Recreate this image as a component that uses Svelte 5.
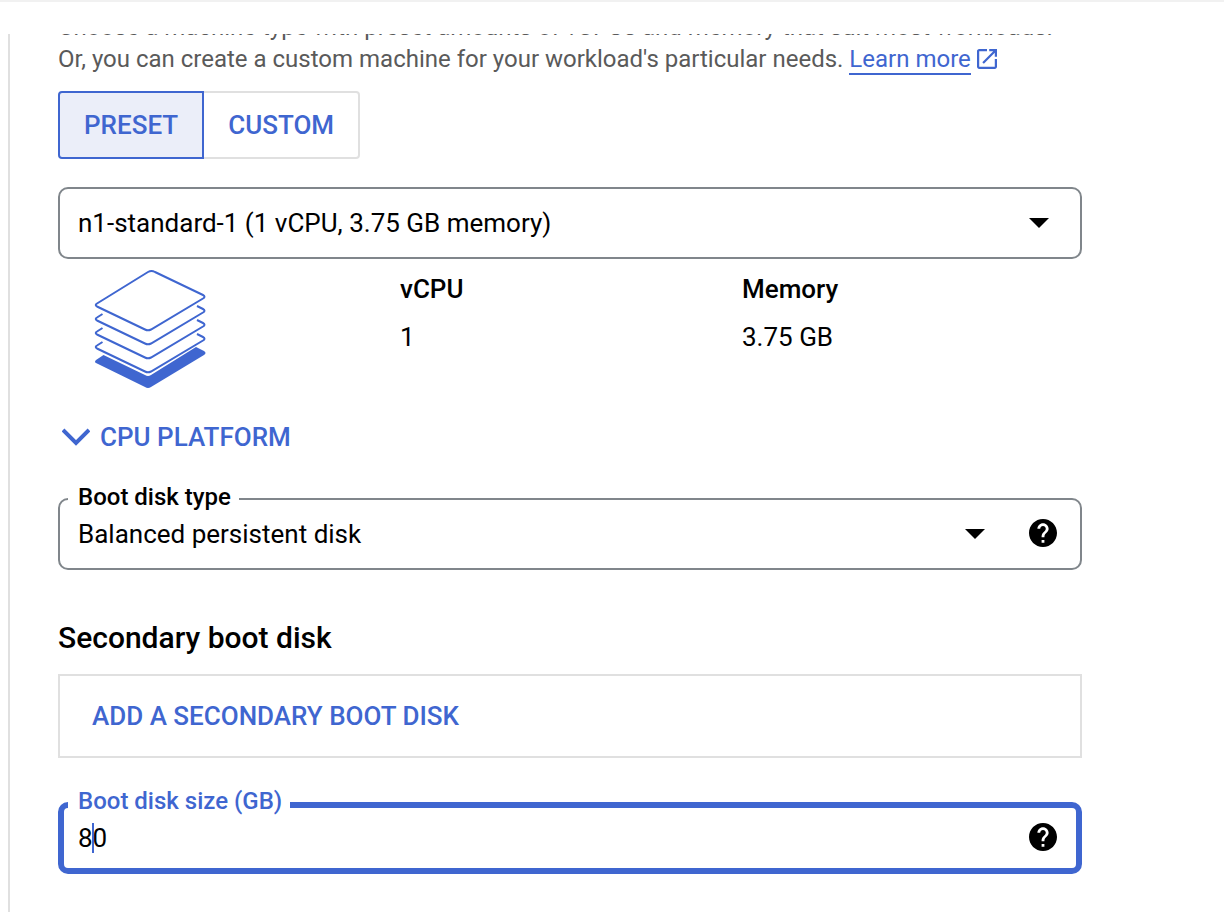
<script lang="ts">
	let mode = 'preset';
	let machineType = 'n1-standard-1';
	let diskType = 'balanced';
	let diskSize = '80';
	let showPlatform = false;

	const layers = [42, 28, 14];
</script>

{#snippet arrow()}
	<svg class="arrow" viewBox="0 0 20 10" aria-hidden="true"><path d="M0 0h20L10 10z" /></svg>
{/snippet}

{#snippet help(label: string)}
	<button class="help" type="button" aria-label={label}>
		<svg viewBox="2 2 20 20" aria-hidden="true">
			<path d="M12 2C6.48 2 2 6.48 2 12s4.48 10 10 10 10-4.48 10-10S17.52 2 12 2zm1 17h-2v-2h2v2zm2.07-7.75l-.9.92C13.45 12.9 13 13.5 13 15h-2v-.5c0-1.1.45-2.1 1.17-2.83l1.24-1.26c.37-.36.59-.86.59-1.41 0-1.1-.9-2-2-2s-2 .9-2 2H8c0-2.21 1.79-4 4-4s4 1.79 4 4c0 .88-.36 1.68-.93 2.25z" />
		</svg>
	</button>
{/snippet}

<div class="page">
	<header class="top-bar"></header>

	<main class="panel">
		<p class="intro">
			Choose a machine type with preset amounts of vCPUs and memory that suit most workloads.<br />
			Or, you can create a custom machine for your workload's particular needs.
			<a href="/docs/machine-types"><span>Learn more</span><svg class="external" viewBox="3 3 18 18" aria-hidden="true"><path d="M19 19H5V5h7V3H5c-1.11 0-2 .9-2 2v14c0 1.1.89 2 2 2h14c1.1 0 2-.9 2-2v-7h-2v7zM14 3v2h3.59l-9.83 9.83 1.41 1.41L19 6.41V10h2V3h-7z" /></svg></a>
		</p>

		<div class="toggle">
			<button type="button" class:active={mode === 'preset'} on:click={() => (mode = 'preset')}>PRESET</button>
			<button type="button" class:active={mode === 'custom'} on:click={() => (mode = 'custom')}>CUSTOM</button>
		</div>

		<div class="field machine">
			<select aria-label="Machine type" bind:value={machineType}>
				<option value="n1-standard-1">n1-standard-1 (1 vCPU, 3.75 GB memory)</option>
			</select>
			{@render arrow()}
		</div>

		<!-- Machine summary -->
		<div class="summary">
			<svg class="stack" viewBox="0 0 112 120" aria-hidden="true">
				<path class="solid" d="M9.500 86L2 91Q0 93 2 94L51 118Q54 120 57 118L110 86Q113 84 110 82L102 78L57 106Q54 108 51 106Z" />
				{#each layers as y}
					<path d="M8.500 31L3 34.500Q.5 36 3 37.500L51 60.500Q54 62 57 60.500L109 29.500Q112 27.500 109 26L103 23" transform="translate(0 {y})" />
				{/each}
				<path class="top" d="M3 34.500L54 3Q57.500 1 61 3L109 26Q112 27.500 109 29.500L57 60.500Q54 62 51 60.500L3 37.500Q.5 36 3 34.500Z" />
			</svg>
			<dl>
				<dt>vCPU</dt>
				<dd>1</dd>
			</dl>
			<dl>
				<dt>Memory</dt>
				<dd>3.75 GB</dd>
			</dl>
		</div>

		<button class="platform" type="button" aria-expanded={showPlatform} on:click={() => (showPlatform = !showPlatform)}>
			<svg viewBox="0 0 28 18" aria-hidden="true"><path d="M1 2l13 13L27 2" /></svg>
			CPU PLATFORM
		</button>

		<div class="field">
			<label for="disk-type">Boot disk type</label>
			<select id="disk-type" bind:value={diskType}>
				<option value="balanced">Balanced persistent disk</option>
			</select>
			{@render arrow()}
			{@render help('About boot disk type')}
		</div>

		<h2>Secondary boot disk</h2>
		<div class="secondary">
			<button type="button">ADD A SECONDARY BOOT DISK</button>
		</div>

		<div class="field focused">
			<label for="disk-size">Boot disk size (GB)</label>
			<input id="disk-size" type="text" inputmode="numeric" bind:value={diskSize} />
			<span class="caret"></span>
			{@render help('About boot disk size')}
		</div>
	</main>
</div>

<style>
	:global(body) {
		margin: 0;
		background: #fff;
	}
	.page {
		display: flex;
		flex-direction: column;
		min-height: 100vh;
		color: #000;
		font-family: Roboto, "Liberation Sans", sans-serif;
		font-size: 26px;
		line-height: 32px;
	}
	button, input, select {
		font: inherit;
		color: inherit;
		background: none;
		border: none;
		padding: 0;
		margin: 0;
	}
	button {
		cursor: pointer;
	}
	.top-bar {
		box-sizing: border-box;
		height: 34px;
		border-top: 2px solid #f1f1f1;
	}
	.panel {
		flex: 1;
		overflow: hidden;
		margin-left: 8px;
		padding: 0 142px 38px 48px;
		border-left: 2px solid #e0e0e0;
	}
	/* first line is scrolled partly under the top bar */
	.intro {
		margin: -23px 0 16px;
		font-size: 24px;
		color: #5a5a5a;
		white-space: nowrap;
	}
	.intro a {
		color: #3f66d0;
		text-decoration: none;
	}
	.intro a span {
		border-bottom: 2px solid #3f66d0;
	}
	.external {
		width: 20px;
		height: 20px;
		margin-left: 6px;
		vertical-align: -2px;
		fill: #3f66d0;
	}
	.toggle {
		display: flex;
		margin-bottom: 28px;
	}
	.toggle button {
		height: 68px;
		padding: 0 24px;
		border: 2px solid #e0e0e0;
		border-radius: 0 4px 4px 0;
		color: #3f66d0;
		font-weight: 500;
	}
	.toggle button:first-child {
		border-radius: 4px 0 0 4px;
	}
	.toggle button + button {
		margin-left: -2px;
	}
	.toggle button.active {
		position: relative;
		border-color: #3f66d0;
		background: #ebeef9;
	}
	.field {
		position: relative;
		box-sizing: border-box;
		display: flex;
		align-items: center;
		height: 72px;
		padding: 0 23px 0 18px;
		border: 2px solid #80868b;
		border-radius: 10px;
	}
	.field.machine {
		padding-right: 31px;
	}
	.field.focused {
		padding: 0 19px 0 14px;
		border: 6px solid #3f66d0;
	}
	.field label {
		position: absolute;
		top: -19px;
		left: 8px;
		padding: 0 8px 0 10px;
		background: #fff;
		font-size: 24px;
		font-weight: 500;
	}
	.field.focused label {
		top: -23px;
		left: 4px;
		color: #3f66d0;
	}
	.field select,
	.field input {
		flex: 1;
		min-width: 0;
		height: 60px;
		appearance: none;
		outline: none;
	}
	.caret {
		position: absolute;
		top: 15px;
		left: calc(13px + 1ch);
		width: 2px;
		height: 30px;
		background: #3f66d0;
	}
	.arrow {
		width: 20px;
		height: 10px;
	}
	.help {
		display: flex;
		padding-bottom: 2px;
	}
	.arrow + .help {
		margin-left: 44px;
	}
	.help svg {
		width: 28px;
		height: 28px;
	}
	.summary {
		display: grid;
		grid-template-columns: repeat(3, 1fr);
		column-gap: 2px;
		margin: 6px 0 32px;
	}
	.stack {
		width: 112px;
		height: 120px;
		margin: 4px 0 0 36px;
		fill: none;
		stroke: #3f66d0;
		stroke-width: 2;
	}
	.stack .solid {
		fill: #3f66d0;
		stroke: none;
	}
	.stack .top {
		fill: #fff;
	}
	dl {
		margin: 0;
		line-height: 48px;
	}
	dt {
		font-weight: 500;
	}
	dd {
		margin: 0;
	}
	.platform {
		display: flex;
		align-items: center;
		gap: 10px;
		margin: 0 0 45px 4px;
		color: #3f66d0;
		font-weight: 500;
	}
	.platform svg {
		width: 28px;
		height: 18px;
		fill: none;
		stroke: #3f66d0;
		stroke-width: 4;
	}
	h2 {
		margin: 48px 0 16px;
		font-size: 30px;
		font-weight: 500;
		line-height: 40px;
	}
	.secondary {
		box-sizing: border-box;
		display: flex;
		height: 84px;
		margin-bottom: 44px;
		padding: 0 32px;
		border: 2px solid #e0e0e0;
	}
	.secondary button {
		color: #3f66d0;
		font-weight: 500;
	}
</style>
